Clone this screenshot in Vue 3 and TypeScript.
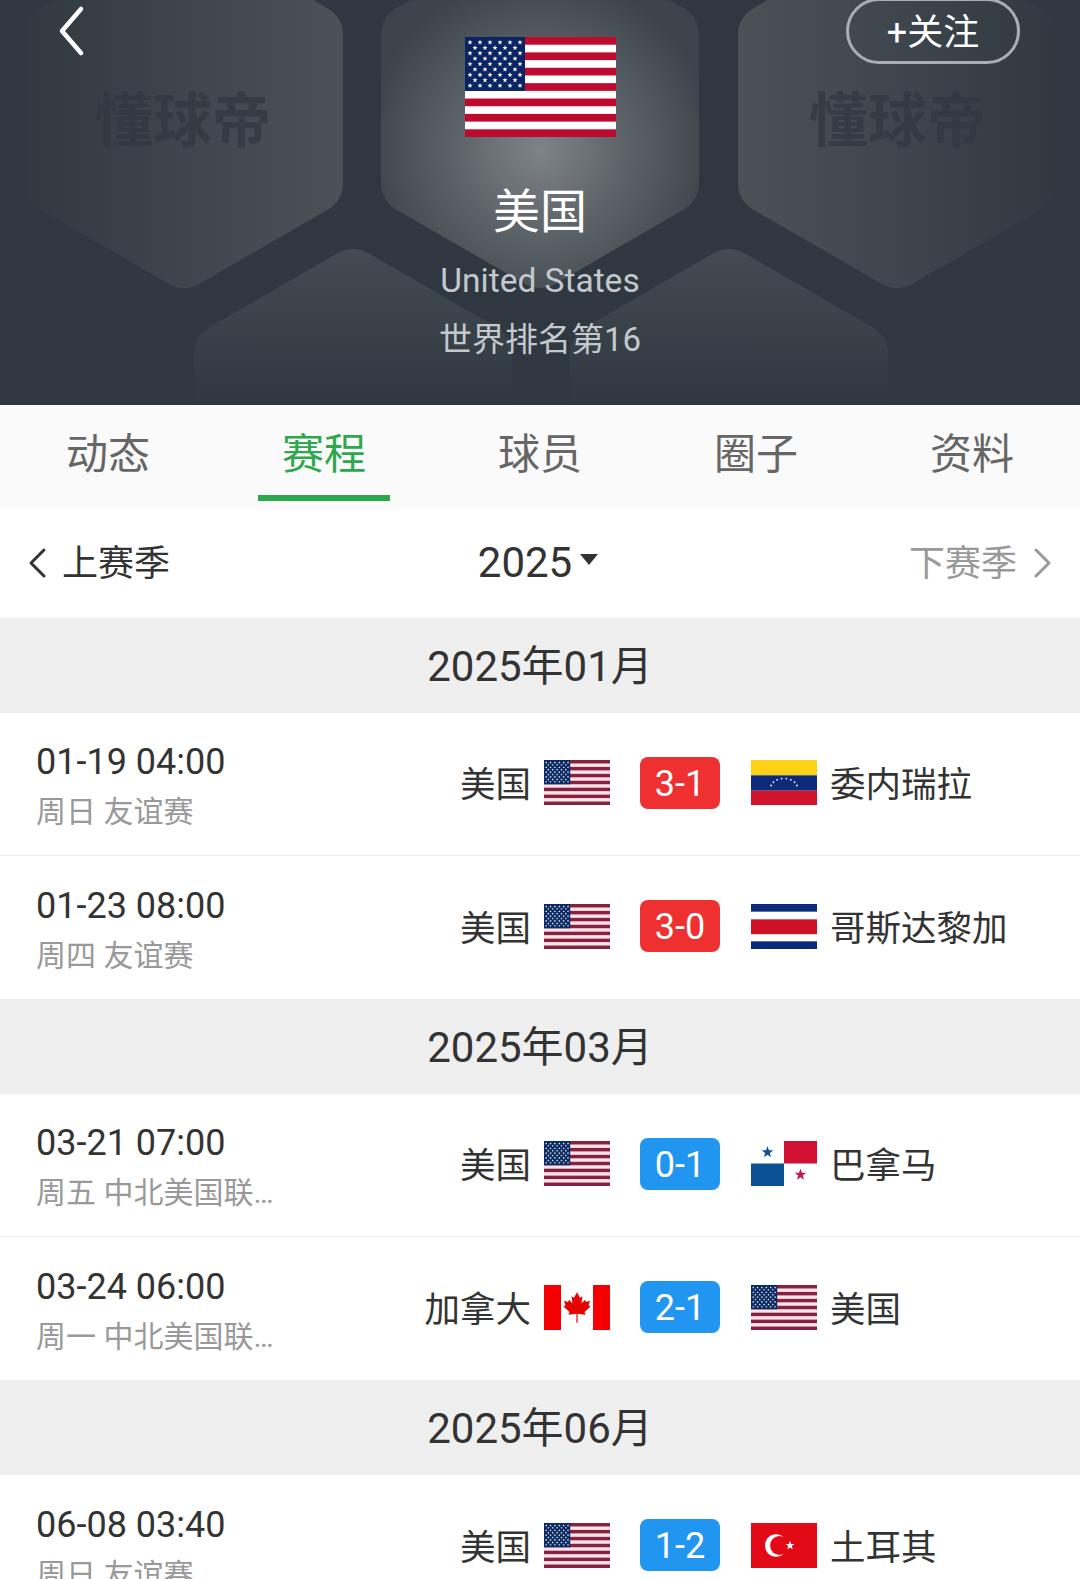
<template>
  <div class="page">
    <!-- flags shared by the rows -->
    <svg class="defs" width="0" height="0" aria-hidden="true">
      <symbol
        v-for="us in usFlags"
        :id="us.id"
        :key="us.id"
        viewBox="0 0 151 100"
        preserveAspectRatio="none"
      >
        <rect width="151" height="100" :fill="us.light" />
        <rect
          v-for="y in stripeRows"
          :key="y"
          x="0"
          :y="y"
          width="151"
          height="7.7"
          :fill="us.red"
        />
        <rect width="60" height="54" :fill="us.blue" />
        <polygon
          v-for="(p, i) in usStars"
          :key="i"
          :points="p"
          fill="#fff"
        />
      </symbol>

      <symbol id="flag-ve" viewBox="0 0 66 44" preserveAspectRatio="none">
        <rect width="66" height="15" fill="#fcd116" />
        <rect y="15" width="66" height="15" fill="#0b2a7a" />
        <rect y="30" width="66" height="14" fill="#cf142b" />
        <circle
          v-for="(d, i) in veDots"
          :key="i"
          :cx="d.x"
          :cy="d.y"
          r="0.9"
          fill="#fff"
        />
      </symbol>

      <symbol id="flag-cr" viewBox="0 0 66 44" preserveAspectRatio="none">
        <rect width="66" height="44" fill="#fff" />
        <rect width="66" height="7.5" fill="#0b2a7a" />
        <rect y="15" width="66" height="14.5" fill="#ce1126" />
        <rect y="36.5" width="66" height="7.5" fill="#0b2a7a" />
      </symbol>

      <symbol id="flag-pa" viewBox="0 0 66 44" preserveAspectRatio="none">
        <rect width="66" height="44" fill="#fff" />
        <rect x="33" width="33" height="22" fill="#d21034" />
        <rect y="22" width="33" height="22" fill="#0a5294" />
        <polygon :points="star(16.5, 11, 6)" fill="#0a5294" />
        <polygon :points="star(49.5, 33, 6)" fill="#c2184a" />
      </symbol>

      <symbol id="flag-ca" viewBox="0 0 66 44" preserveAspectRatio="none">
        <rect width="66" height="44" fill="#fff" />
        <rect width="17" height="44" fill="#f40000" />
        <rect x="49" width="17" height="44" fill="#f40000" />
        <polygon
          fill="#e60000"
          points="33,7 36,12.5 38.5,11 37.5,18 41,14.5 42,16.5 46,15.5 44.5,20 46.5,21 40.5,26.5 41.5,29 33.6,28.2 33.6,37 32.4,37 32.4,28.2 24.5,29 25.5,26.5 19.5,21 21.5,20 20,15.5 24,16.5 25,14.5 28.5,18 27.5,11 30,12.5"
        />
      </symbol>

      <symbol id="flag-tr" viewBox="0 0 66 44" preserveAspectRatio="none">
        <rect width="66" height="44" fill="#e30a17" />
        <circle cx="25" cy="22" r="11" fill="#fff" />
        <circle cx="28.5" cy="22" r="9.4" fill="#e30a17" />
        <polygon :points="star(39, 22, 4.6)" fill="#fff" />
      </symbol>
    </svg>

    <header class="team-head">
      <svg class="hex-bg" viewBox="0 0 1080 405" width="1080" height="405" aria-hidden="true">
        <defs>
          <linearGradient id="hexLeft" gradientUnits="userSpaceOnUse" x1="24" y1="0" x2="342" y2="0">
            <stop offset="0" stop-color="#303940" />
            <stop offset="0.5" stop-color="#3e464d" />
            <stop offset="1" stop-color="#4a5258" />
          </linearGradient>
          <linearGradient id="hexRight" gradientUnits="userSpaceOnUse" x1="738" y1="0" x2="1056" y2="0">
            <stop offset="0" stop-color="#4a5258" />
            <stop offset="0.55" stop-color="#3d454c" />
            <stop offset="1" stop-color="#303940" />
          </linearGradient>
          <radialGradient id="hexMid" gradientUnits="userSpaceOnUse" cx="540" cy="150" r="175">
            <stop offset="0" stop-color="#7e8387" />
            <stop offset="0.5" stop-color="#5b6267" />
            <stop offset="1" stop-color="#3c444b" />
          </radialGradient>
          <linearGradient id="hexLow" gradientUnits="userSpaceOnUse" x1="0" y1="250" x2="0" y2="405">
            <stop offset="0" stop-color="#434b52" />
            <stop offset="1" stop-color="#2f3840" />
          </linearGradient>
        </defs>
        <polygon
          v-for="h in hexes"
          :key="h.cx"
          :points="hexPoints(h.cx, h.cy)"
          :fill="`url(#${h.id})`"
          :stroke="`url(#${h.id})`"
          stroke-width="60"
          stroke-linejoin="round"
        />
      </svg>

      <span class="mark mark-left">懂球帝</span>
      <span class="mark mark-right">懂球帝</span>

      <svg class="back" width="30" height="52" viewBox="0 0 30 52" aria-hidden="true">
        <path d="M24 4 L5 26 L24 48" fill="none" stroke="#fff" stroke-width="4.5" stroke-linecap="round" stroke-linejoin="round" />
      </svg>
      <div class="follow">+关注</div>

      <svg class="team-flag"><use href="#flag-us-big" /></svg>
      <div class="team-name">美国</div>
      <div class="team-en">United States</div>
      <div class="team-rank">世界排名第16</div>
    </header>

    <nav class="tabs">
      <div
        v-for="(tab, i) in tabs"
        :key="tab"
        class="tab"
        :class="{ active: i === 1 }"
      >
        {{ tab }}
      </div>
    </nav>

    <div class="season">
      <div class="season-side">
        <svg class="chev" width="20" height="32" viewBox="0 0 20 32" aria-hidden="true">
          <path d="M17 3 L4 16 L17 29" fill="none" stroke="#333" stroke-width="3" stroke-linecap="round" stroke-linejoin="round" />
        </svg>
        <span>上赛季</span>
      </div>
      <div class="season-year">
        2025<i class="caret"></i>
      </div>
      <div class="season-side next">
        <span>下赛季</span>
        <svg class="chev" width="20" height="32" viewBox="0 0 20 32" aria-hidden="true">
          <path d="M3 3 L16 16 L3 29" fill="none" stroke="#999" stroke-width="3" stroke-linecap="round" stroke-linejoin="round" />
        </svg>
      </div>
    </div>

    <section v-for="group in schedule" :key="group.month">
      <div class="month">{{ group.month }}</div>
      <div v-for="m in group.matches" :key="m.date" class="match">
        <div class="info">
          <div class="date">{{ m.date }}</div>
          <div class="meta">{{ m.meta }}</div>
        </div>
        <div class="team home">
          <span>{{ m.home }}</span>
          <svg class="flag"><use :href="`#flag-${m.homeFlag}`" /></svg>
        </div>
        <div class="score-cell">
          <div class="score" :class="m.win ? 'red' : 'blue'">{{ m.score }}</div>
        </div>
        <div class="team away">
          <svg class="flag"><use :href="`#flag-${m.awayFlag}`" /></svg>
          <span>{{ m.away }}</span>
        </div>
      </div>
    </section>
  </div>
</template>

<script setup lang="ts">
interface Match {
  date: string;
  meta: string;
  home: string;
  homeFlag: string;
  score: string;
  win: boolean;
  away: string;
  awayFlag: string;
}

const tabs = ["动态", "赛程", "球员", "圈子", "资料"];

const star = (cx: number, cy: number, r: number) => {
  const pts: string[] = [];
  for (let i = 0; i < 10; i++) {
    const rad = i % 2 === 0 ? r : r * 0.4;
    const a = -Math.PI / 2 + (i * Math.PI) / 5;
    pts.push(`${(cx + rad * Math.cos(a)).toFixed(2)},${(cy + rad * Math.sin(a)).toFixed(2)}`);
  }
  return pts.join(" ");
};

// 13 полос флага, красные через одну
const stripeRows = Array.from({ length: 7 }, (_, i) => i * 15.385);

const usStars: string[] = [];
for (let row = 0; row < 9; row++) {
  const count = row % 2 === 0 ? 6 : 5;
  const offset = row % 2 === 0 ? 5 : 10;
  for (let col = 0; col < count; col++) {
    usStars.push(star(offset + col * 10, 5.4 * (row + 1), 2.7));
  }
}

const usFlags = [
  { id: "flag-us-big", red: "#bf0a30", light: "#ffffff", blue: "#0a2463" },
  { id: "flag-us", red: "#86213f", light: "#fbe3ea", blue: "#0c2a63" },
];

const veDots = Array.from({ length: 8 }, (_, i) => {
  const a = Math.PI * (1.12 + (i * 0.76) / 7);
  return { x: 33 + 14 * Math.cos(a), y: 29 + 11 * Math.sin(a) };
});

const hexes = [
  { id: "hexLeft", cx: 184, cy: 109 },
  { id: "hexMid", cx: 540, cy: 109 },
  { id: "hexRight", cx: 897, cy: 109 },
  { id: "hexLow", cx: 353, cy: 428 },
  { id: "hexLow", cx: 729, cy: 428 },
];

const hexPoints = (cx: number, cy: number) => {
  const w = 129;
  const r = 149;
  return [
    [cx, cy - r],
    [cx + w, cy - r / 2],
    [cx + w, cy + r / 2],
    [cx, cy + r],
    [cx - w, cy + r / 2],
    [cx - w, cy - r / 2],
  ]
    .map((p) => p.join(","))
    .join(" ");
};

const schedule: { month: string; matches: Match[] }[] = [
  {
    month: "2025年01月",
    matches: [
      { date: "01-19 04:00", meta: "周日 友谊赛", home: "美国", homeFlag: "us", score: "3-1", win: true, away: "委内瑞拉", awayFlag: "ve" },
      { date: "01-23 08:00", meta: "周四 友谊赛", home: "美国", homeFlag: "us", score: "3-0", win: true, away: "哥斯达黎加", awayFlag: "cr" },
    ],
  },
  {
    month: "2025年03月",
    matches: [
      { date: "03-21 07:00", meta: "周五 中北美国联赛", home: "美国", homeFlag: "us", score: "0-1", win: false, away: "巴拿马", awayFlag: "pa" },
      { date: "03-24 06:00", meta: "周一 中北美国联赛", home: "加拿大", homeFlag: "ca", score: "2-1", win: false, away: "美国", awayFlag: "us" },
    ],
  },
  {
    month: "2025年06月",
    matches: [
      { date: "06-08 03:40", meta: "周日 友谊赛", home: "美国", homeFlag: "us", score: "1-2", win: false, away: "土耳其", awayFlag: "tr" },
    ],
  },
];
</script>

<style>
html,
body {
  margin: 0;
  background: #fff;
}
</style>

<style scoped>
.page {
  width: 1080px;
  height: 1579px;
  overflow: hidden;
  background: #fff;
  font-family: Roboto, "Noto Sans CJK SC", sans-serif;
  color: #333;
}

.defs {
  position: absolute;
}

.team-head {
  position: relative;
  height: 405px;
  box-sizing: border-box;
  padding-top: 37px;
  background: #2f3840;
  overflow: hidden;
  display: flex;
  flex-direction: column;
  align-items: center;
}

.hex-bg {
  position: absolute;
  left: 0;
  top: 0;
}

.mark {
  position: absolute;
  top: 86px;
  font-size: 59px;
  line-height: 72px;
  font-weight: 700;
  color: #2f3840;
  opacity: 0.75;
}

.mark-left {
  left: 94px;
}

.mark-right {
  left: 809px;
}

.back {
  position: absolute;
  left: 57px;
  top: 5px;
}

.follow {
  position: absolute;
  left: 846px;
  top: -2px;
  width: 174px;
  height: 66px;
  box-sizing: border-box;
  border: 3px solid #a9aeb2;
  border-radius: 33px;
  padding-bottom: 4px;
  display: flex;
  align-items: center;
  justify-content: center;
  font-size: 36px;
  color: #fff;
}

.team-flag {
  position: relative;
  width: 151px;
  height: 100px;
  flex: none;
}

.team-name {
  position: relative;
  margin-top: 38px;
  font-size: 47px;
  line-height: 74px;
  color: #fff;
}

.team-en {
  position: relative;
  margin-top: 12px;
  font-size: 33.5px;
  line-height: 40px;
  color: #c3c8cd;
}

.team-rank {
  position: relative;
  margin-top: 18px;
  font-size: 33px;
  line-height: 42px;
  color: #c3c8cd;
}

.tabs {
  height: 104px;
  display: grid;
  grid-template-columns: repeat(5, 1fr);
  background: #fafafa;
}

.tab {
  position: relative;
  text-align: center;
  font-size: 42px;
  line-height: 100px;
  color: #666;
}

.tab.active {
  color: #2ea84e;
}

.tab.active::after {
  content: "";
  position: absolute;
  left: 42px;
  width: 132px;
  top: 90px;
  height: 6px;
  background: #2ba84a;
}

.season {
  height: 109px;
  display: grid;
  grid-template-columns: 1fr auto 1fr;
  align-items: center;
  padding: 0 27px 2px;
  box-sizing: border-box;
}

.season-side {
  display: flex;
  align-items: center;
  gap: 15px;
  font-size: 36px;
  color: #333;
}

.season-side span {
  margin-top: -6px;
}

.season-side.next {
  justify-content: flex-end;
  gap: 16px;
  color: #999;
}

.season-year {
  display: flex;
  align-items: center;
  font-size: 42px;
  color: #333;
  margin-left: -4px;
}

.caret {
  width: 0;
  height: 0;
  margin: -6px 0 0 8px;
  border-left: 9px solid transparent;
  border-right: 9px solid transparent;
  border-top: 11px solid #333;
}

.month {
  height: 95px;
  line-height: 98px;
  text-align: center;
  background: #efefef;
  font-size: 42px;
  color: #333;
}

.match {
  height: 143px;
  box-sizing: border-box;
  padding: 0 0 3px 36px;
  display: grid;
  grid-template-columns: 291px 283px 141px 1fr;
  align-items: center;
  border-bottom: 1px solid #ececec;
}

.match:last-child {
  border-bottom: none;
}

.info {
  padding-top: 7px;
  min-width: 0;
}

.date {
  font-size: 36px;
  line-height: 48px;
  color: #333;
}

.meta {
  margin-top: 4px;
  width: 240px;
  font-size: 30px;
  line-height: 44px;
  color: #999;
  white-space: nowrap;
  overflow: hidden;
  text-overflow: ellipsis;
}

.team {
  display: flex;
  align-items: center;
  gap: 13px;
  font-size: 35.5px;
  color: #333;
}

.team span {
  margin-top: -2px;
}

.team.home {
  justify-content: flex-end;
}

.flag {
  width: 66px;
  height: 45px;
  flex: none;
}

.score-cell {
  display: flex;
  justify-content: center;
  padding-right: 1px;
}

.score {
  width: 80px;
  height: 52px;
  border-radius: 8px;
  line-height: 54px;
  text-align: center;
  font-size: 36px;
  color: #fff;
}

.score.red {
  background: #ee3030;
}

.score.blue {
  background: #2196f0;
}
</style>
